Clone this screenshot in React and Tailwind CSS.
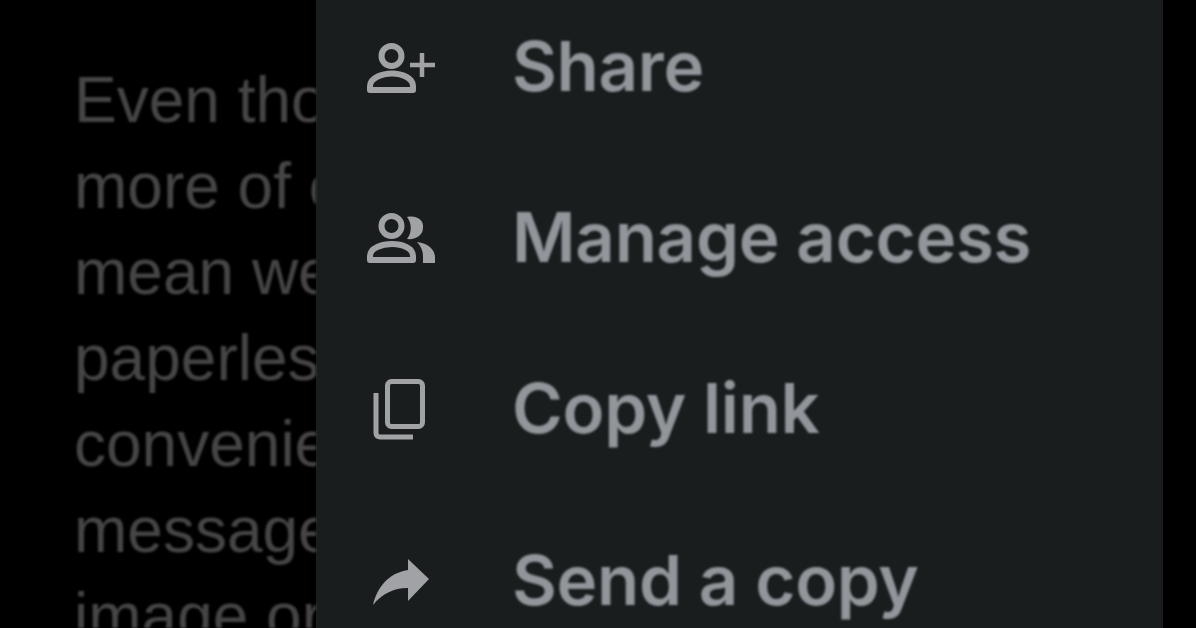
import React from 'react';

const ShareIcon = () => (
  <svg viewBox="0 0 80 80" className="h-20 w-20 shrink-0" fill="none" stroke="currentColor" strokeWidth="6">
    <circle cx="31.5" cy="28" r="10" />
    <path d="M10 62V58C10 50 22 45.5 32 45.5S53 50 53 58V62Z" strokeLinejoin="round" />
    <path d="M62 25V49M50 37H75" strokeWidth="4.5" />
  </svg>
);

const AccessIcon = () => (
  <svg viewBox="0 0 80 80" className="h-20 w-20 shrink-0" fill="none" stroke="currentColor" strokeWidth="6">
    <circle cx="31.5" cy="27" r="10" />
    <path d="M10 61V57C10 49 22 45 32 45S53 49 53 57V61Z" strokeLinejoin="round" />
    <path d="M47 18C58 16 64 22 63 29C63 36 56 41 47 40C52 34 52 24 47 18Z" fill="currentColor" stroke="none" />
    <path d="M57 43C68 44 75 51 75 58V64H63V57C63 52 61 47 57 43Z" fill="currentColor" stroke="none" />
  </svg>
);

const CopyIcon = () => (
  <svg viewBox="0 0 80 80" className="h-20 w-20 shrink-0" fill="none" stroke="currentColor" strokeWidth="5">
    <rect x="27.5" y="10.5" width="35" height="45" rx="4" />
    <path d="M16 22V62C16 65 18 66 20 66H53" />
  </svg>
);

const SendIcon = () => (
  <svg viewBox="0 0 80 80" className="h-20 w-20 shrink-0" fill="currentColor">
    <path d="M48 17L69 37L48 59V46C33 46 22 52 13 63C17 46 28 31 48 28Z" />
  </svg>
);

const items = [
  { label: 'Share', icon: <ShareIcon /> },
  { label: 'Manage access', icon: <AccessIcon /> },
  { label: 'Copy link', icon: <CopyIcon /> },
  { label: 'Send a copy', icon: <SendIcon /> },
];

const lines = ['Even though', 'more of our', 'mean we', 'paperless', 'convenience', 'messages', 'image or'];

export default function App() {
  return (
    <div className="flex h-[628px] w-[1196px] overflow-hidden bg-black">
      {/* Document behind the menu */}
      <div className="w-[316px] shrink-0 overflow-hidden pl-[74px] pt-[57px] font-['Liberation_Sans',sans-serif] text-[64px] leading-[86px] whitespace-nowrap text-[#454545] blur-[1px]">
        {lines.map((line) => (
          <p key={line}>{line}</p>
        ))}
      </div>

      {/* Menu sheet */}
      <div className="flex w-[847px] shrink-0 flex-col gap-[91.4px] bg-[#1a1d1e] pl-[44px] pt-[28px] text-[#92959a]">
        {items.map((item) => (
          <div key={item.label} className="flex h-20 shrink-0 items-center gap-[72px]">
            <span className="text-[#a0a2a5] blur-[0.5px]">{item.icon}</span>
            <span className="pb-[4px] font-['Inter',sans-serif] text-[69px] leading-none font-semibold tracking-[-0.3px] whitespace-nowrap blur-[0.8px]">
              {item.label}
            </span>
          </div>
        ))}
      </div>
    </div>
  );
}
